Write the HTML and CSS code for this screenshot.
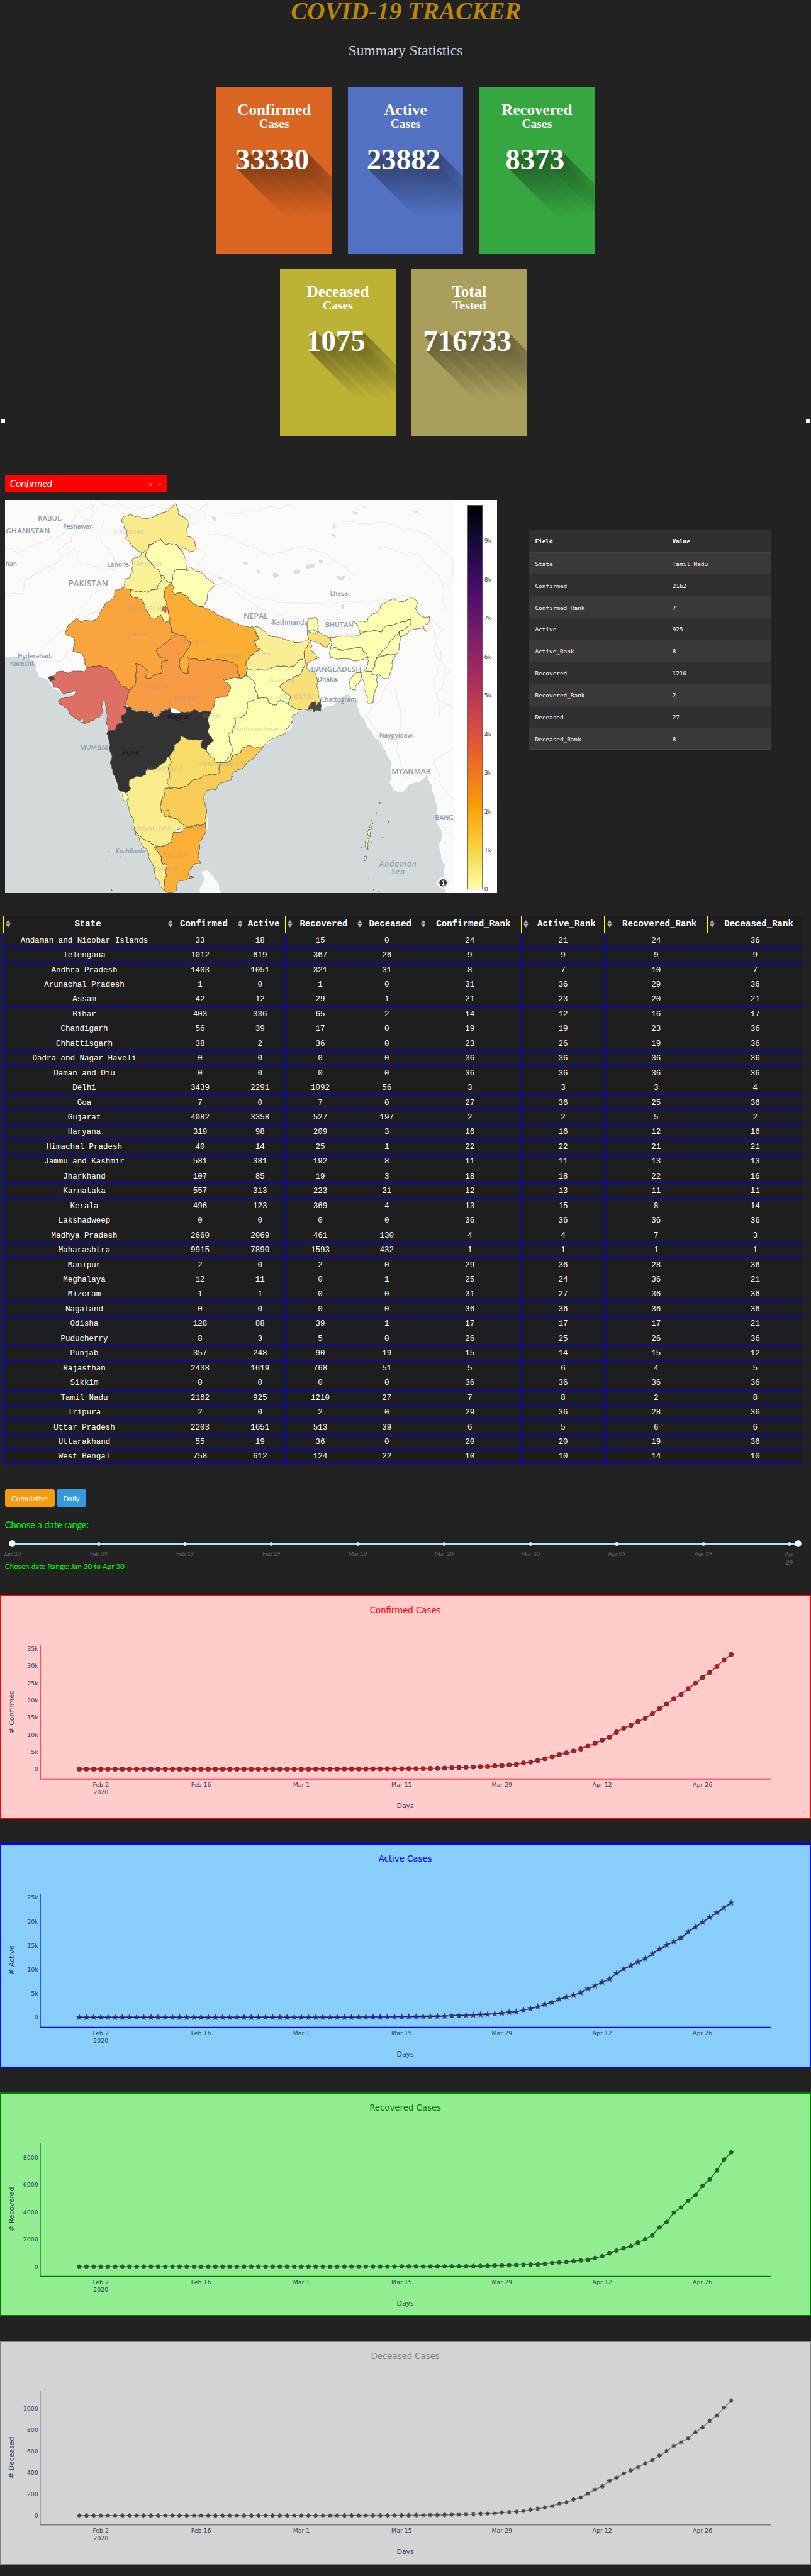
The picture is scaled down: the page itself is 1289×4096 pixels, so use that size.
FILE: index.html
```html
<!DOCTYPE html>
<html lang="en">
<head>
<meta charset="utf-8">
<title>COVID-19 Tracker</title>
<link rel="stylesheet" href="styles.css">
</head>
<body>
<div class="page">
  <header class="header">
    <h1 class="title">COVID-19 TRACKER</h1>
    <h2 class="subtitle">Summary Statistics</h2>
  </header>

  <section class="summary">
    <div class="card-row">
      <article class="card" data-rgb="219,101,35"><h3>Confirmed</h3><h4>Cases</h4><p class="count">33330</p></article>
      <article class="card" data-rgb="83,113,195"><h3>Active</h3><h4>Cases</h4><p class="count">23882</p></article>
      <article class="card" data-rgb="54,166,65"><h3>Recovered</h3><h4>Cases</h4><p class="count">8373</p></article>
    </div>
    <div class="card-row second">
      <article class="card" data-rgb="188,178,54"><h3>Deceased</h3><h4>Cases</h4><p class="count">1075</p></article>
      <article class="card" data-rgb="169,158,92"><h3>Total</h3><h4>Tested</h4><p class="count">716733</p></article>
    </div>
    <span class="handle left"></span><span class="handle right"></span>
  </section>

  <div class="dropdown"><span class="value">Confirmed</span><span class="clear">×</span><span class="caret"></span></div>

  <section class="overview">
    <svg class="map" id="map" viewBox="0 0 1000 800"></svg>
    <table class="info" id="info"></table>
  </section>

  <table class="states" id="states"></table>

  <div class="buttons"><button class="btn cumulative">Cumulative</button><button class="btn daily">Daily</button></div>
  <p class="range-label">Choose a date range:</p>
  <div class="slider" id="slider"></div>
  <p class="range-value">Chosen date Range: Jan 30 to Apr 30</p>

  <section class="charts" id="charts"></section>
</div>
<script src="script.js"></script>
</body>
</html>
```
FILE: styles.css
```css
* { box-sizing: border-box; }
body { margin: 0; background: #222; overflow-x: hidden; }
.page { width: 1648px; height: 5236px; zoom: 0.7822; background: #222; overflow: hidden; position: relative; }
h1, h2, h3, h4, p { margin: 0; }

.header { text-align: center; font-family: "Liberation Serif", serif; }
.title { font-size: 50px; line-height: 45px; font-style: italic; font-weight: 700; color: #b8860b; padding-left: 2px; }
.subtitle { margin-top: 38px; font-size: 30px; line-height: 40px; font-weight: 400; color: #c8d0d8; }

.summary { position: relative; margin-top: 53px; height: 789px; font-family: "Liberation Serif", serif; }
.card-row { display: flex; justify-content: center; gap: 32px; }
.card-row.second { margin-top: 30px; padding-right: 8px; }
.card { width: 235px; height: 340px; padding-top: 32.5px; overflow: hidden; text-align: center; color: #fff; font-weight: 700; }
.card h3 { font-size: 32px; line-height: 30px; }
.card h4 { font-size: 25px; line-height: 26px; }
.count { margin-top: 29px; padding-right: 8px; font-size: 60px; line-height: 60px; }
.handle { position: absolute; top: 676px; width: 9px; height: 9px; background: #fff; border-top: 1px solid #888; border-bottom: 1px solid #888; }
.handle.left { left: 1px; }
.handle.right { right: 1px; }

.dropdown { display: flex; align-items: center; width: 330px; height: 36px; margin-left: 10px; padding: 0 11px 0 10px; background: #f00; border-bottom: 1px solid #555; color: #fff; font-family: Lato, sans-serif; }
.dropdown .value { flex: 1; font-size: 20px; font-style: italic; }
.dropdown .clear { color: #b99; font-size: 18px; margin-right: 10px; padding-top: 2px; }
.dropdown .caret { border: 5px solid transparent; border-top-color: #a99; border-bottom: 0; margin-top: 5px; }

.overview { display: flex; align-items: flex-start; margin: 15px 0 46px 10px; }
.map { display: block; width: 1000px; height: 800px; background: #fff; flex: none; font-family: "Open Sans", sans-serif; }
.map .tick { font-family: "DejaVu Sans", sans-serif; font-size: 12px; fill: #2a3f5f; }
.map .state { stroke: #4b4b46; stroke-width: 1; stroke-linejoin: round; }
.map .label { fill: #8a9ba8; font-weight: 600; }
.map .road { fill: none; stroke-width: 1; }

.info { width: 494px; margin: 60px 0 0 64px; table-layout: fixed; border-spacing: 0; border-top: 1px solid #444; border-left: 1px solid #444; color: #fff; font: 12px "DejaVu Sans Mono", monospace; text-align: left; }
.info th, .info td { height: 44.6px; padding: 0 0 0 12px; border-right: 1px solid #444; border-bottom: 1px solid #444; background: #303030; line-height: 20px; padding-top: 3px; }
.info th { height: 46px; border-bottom-width: 2px; }
.info th:first-child { width: 279px; }

.states { width: 1627px; margin-left: 6px; table-layout: fixed; border-spacing: 0; background: #1e1e1e; color: #fff; font: 16px "Liberation Mono", monospace; text-align: center; }
.states th { height: 35px; padding: 0 0 3px; border: solid #ff0; border-width: 2px 0 2px 2px; font-size: 18px; }
.states th:last-child { border-right-width: 2px; }
.states th > div { display: flex; align-items: center; padding-left: 4px; }
.states th span { flex: 1; }
.states th svg { display: block; width: 10px; height: 15px; fill: #a9a9a9; flex: none; }
.states td { height: 30px; padding: 2px 0 0; border-bottom: 1.4px solid #00f; line-height: 26px; }
.states td:nth-child(1), .states td:nth-child(4), .states td:nth-child(5), .states td:nth-child(6), .states td:nth-child(7), .states td:nth-child(8) { border-left: 1px solid #00f; }
.states td:last-child { border-right: 1px solid #00f; }

.buttons { display: flex; gap: 4px; margin: 51px 0 0 10px; }
.btn { height: 36px; padding: 0; border: 0; border-radius: 4px; color: #fff; font: 15px Lato, sans-serif; }
.cumulative { width: 101px; background: #f39c12; }
.daily { width: 60px; background: #3498db; }
.range-label { margin: 21px 0 0 10px; font: 18.5px/30px Lato, sans-serif; color: #0f0; }
.slider { position: relative; height: 4px; margin: 22px 26px 0 25px; background: #abe2fb; font: 12px/18px Lato, sans-serif; color: #666; }
.slider .dot { position: absolute; top: -2px; width: 8px; height: 8px; margin-left: -4px; border: 2px solid #96dbfa; border-radius: 50%; background: #fff; }
.slider .knob { position: absolute; top: -5px; width: 14px; height: 14px; margin-left: -7px; border: 2px solid #96dbfa; border-radius: 50%; background: #fff; }
.slider .mark { position: absolute; top: 14px; width: 60px; margin-left: -30px; text-align: center; }
.range-value { margin: 31px 0 0 10px; font: 15px/24px Lato, sans-serif; color: #0f0; }

.charts { margin-top: 47px; display: flex; flex-direction: column; gap: 50px; }
.chart { display: block; width: 1648px; height: 455.5px; border: 3px solid; font-family: "DejaVu Sans", sans-serif; font-size: 12px; }
.chart text { fill: #2a3f5f; }
.chart .name { font-size: 17px; }
.chart .axis { font-size: 14px; }
.chart .axis-line, .chart .series { fill: none; stroke-width: 2; }
.chart .marker { stroke: #444; }
```
FILE: script.js
```js
const el = id => document.getElementById(id);

/* Long diagonal shadow of the counters, fading into the card colour */
document.querySelectorAll('.card').forEach(card => {
  const rgb = card.dataset.rgb.split(',').map(Number);
  card.style.background = `rgb(${rgb})`;
  const steps = [];
  for (let i = 1; i <= 98; i++) {
    const k = 0.64 + 0.36 * i / 98;
    steps.push(`${i}px ${i}px rgb(${rgb.map(v => Math.round(v * k))})`);
  }
  card.querySelector('.count').style.textShadow = steps.join(',');
});

/* Selected state */
const info = [['State', 'Tamil Nadu'], ['Confirmed', 2162], ['Confirmed_Rank', 7], ['Active', 925], ['Active_Rank', 8], ['Recovered', 1210], ['Recovered_Rank', 2], ['Deceased', 27], ['Deceased_Rank', 8]];
el('info').innerHTML = '<thead><tr><th>Field</th><th>Value</th></tr></thead><tbody>' +
  info.map((r, i) => `<tr>${r.map(c => `<td style="background:${i % 2 ? '#303030' : '#3a3a3a'}">${c}</td>`).join('')}</tr>`).join('') + '</tbody>';

/* State table */
const widths = [329.5, 142, 101.5, 142, 128.5, 209.5, 169, 209, 196];
const heads = ['State', 'Confirmed', 'Active', 'Recovered', 'Deceased', 'Confirmed_Rank', 'Active_Rank', 'Recovered_Rank', 'Deceased_Rank'];
const rows = `Andaman and Nicobar Islands,33,18,15,0,24,21,24,36
Telengana,1012,619,367,26,9,9,9,9
Andhra Pradesh,1403,1051,321,31,8,7,10,7
Arunachal Pradesh,1,0,1,0,31,36,29,36
Assam,42,12,29,1,21,23,20,21
Bihar,403,336,65,2,14,12,16,17
Chandigarh,56,39,17,0,19,19,23,36
Chhattisgarh,38,2,36,0,23,26,19,36
Dadra and Nagar Haveli,0,0,0,0,36,36,36,36
Daman and Diu,0,0,0,0,36,36,36,36
Delhi,3439,2291,1092,56,3,3,3,4
Goa,7,0,7,0,27,36,25,36
Gujarat,4082,3358,527,197,2,2,5,2
Haryana,310,98,209,3,16,16,12,16
Himachal Pradesh,40,14,25,1,22,22,21,21
Jammu and Kashmir,581,381,192,8,11,11,13,13
Jharkhand,107,85,19,3,18,18,22,16
Karnataka,557,313,223,21,12,13,11,11
Kerala,496,123,369,4,13,15,8,14
Lakshadweep,0,0,0,0,36,36,36,36
Madhya Pradesh,2660,2069,461,130,4,4,7,3
Maharashtra,9915,7890,1593,432,1,1,1,1
Manipur,2,0,2,0,29,36,28,36
Meghalaya,12,11,0,1,25,24,36,21
Mizoram,1,1,0,0,31,27,36,36
Nagaland,0,0,0,0,36,36,36,36
Odisha,128,88,39,1,17,17,17,21
Puducherry,8,3,5,0,26,25,26,36
Punjab,357,248,90,19,15,14,15,12
Rajasthan,2438,1619,768,51,5,6,4,5
Sikkim,0,0,0,0,36,36,36,36
Tamil Nadu,2162,925,1210,27,7,8,2,8
Tripura,2,0,2,0,29,36,28,36
Uttar Pradesh,2203,1651,513,39,6,5,6,6
Uttarakhand,55,19,36,0,20,20,19,36
West Bengal,758,612,124,22,10,10,14,10`.split('\n').map(r => r.split(','));
el('states').innerHTML = '<colgroup>' + widths.map(w => `<col style="width:${w}px">`).join('') + '</colgroup><thead><tr>' +
  heads.map(h => `<th><div><svg viewBox="0 0 10 15"><path d="M5 0L10 6.5H0zM0 7H10V8H0zM0 8.5H10L5 15z"/></svg><span>${h}</span></div></th>`).join('') + '</tr></thead><tbody>' +
  rows.map(r => `<tr>${r.map(c => `<td>${c}</td>`).join('')}</tr>`).join('') + '</tbody>';

/* Slider marks */
const marks = ['Jan 30', 'Feb 09', 'Feb 19', 'Feb 29', 'Mar 10', 'Mar 20', 'Mar 30', 'Apr 09', 'Apr 19', 'Apr<br>29'];
el('slider').innerHTML = marks.map((m, i) => {
  const p = i * 1000 / 91;
  return `<span class="dot" style="left:${p}%"></span><span class="mark" style="left:${p}%">${m}</span>`;
}).join('') + '<span class="knob" style="left:0%"></span><span class="knob" style="left:100%"></span>';

/* Time series: values from Mar 14 to Apr 30, preceded by the near-flat start */
const pad = (arr, early) => Array.from({ length: 92 - arr.length }, (_, i) => i > 32 ? early * (i - 32) / 12 : early / 30).concat(arr);
const confirmed = pad([100, 113, 125, 140, 155, 175, 210, 290, 360, 440, 530, 610, 690, 730, 900, 1020, 1250, 1380, 1770, 2040, 2500, 3020, 3550, 4200, 4730, 5250, 5850, 6700, 7490, 8410, 9330, 10770, 11890, 12740, 13790, 14780, 16090, 17600, 18920, 20430, 21670, 23380, 24890, 26600, 28100, 29800, 31700, 33330], 90);
const active = pad([90, 95, 100, 115, 130, 150, 170, 240, 310, 360, 420, 480, 530, 580, 750, 850, 1030, 1150, 1540, 1780, 2200, 2670, 3100, 3770, 4200, 4620, 5140, 5930, 6580, 7330, 7950, 9180, 10100, 10760, 11550, 12230, 13260, 14200, 15070, 15800, 16600, 17850, 18840, 19840, 20860, 21860, 22880, 23882], 80);
const recovered = pad([10, 13, 14, 15, 15, 20, 22, 25, 28, 35, 40, 45, 55, 70, 85, 100, 110, 125, 150, 165, 180, 220, 280, 325, 355, 420, 473, 515, 650, 770, 980, 1189, 1353, 1516, 1772, 2010, 2309, 2868, 3265, 3965, 4338, 4827, 5224, 5923, 6390, 7043, 7836, 8373], 4);
const deceased = pad([2, 2, 2, 3, 3, 4, 4, 5, 7, 7, 10, 11, 15, 17, 20, 27, 31, 35, 41, 53, 62, 75, 86, 111, 124, 149, 169, 206, 242, 273, 324, 353, 393, 420, 452, 488, 519, 560, 603, 652, 686, 722, 779, 825, 886, 937, 1008, 1075], 1);

const star = (n, outer, inner) => {
  let d = '';
  for (let i = 0; i < n * 2; i++) {
    const a = -Math.PI / 2 + i * Math.PI / n, r = i % 2 ? inner : outer;
    d += (i ? 'L' : 'M') + (r * Math.cos(a)).toFixed(2) + ' ' + (r * Math.sin(a)).toFixed(2);
  }
  return d + 'z';
};
const shapes = {
  circle: 'M4 0A4 4 0 1 1 -4 0A4 4 0 1 1 4 0z',
  star: star(5, 4.6, 2),
  pentagon: star(5, 4, 3.24),
  asterisk: 'M0-4.6V4.6M-4.6 0H4.6M-3.2-3.2L3.2 3.2M-3.2 3.2L3.2-3.2'
};
const charts = [
  { n: 'Confirmed', v: confirmed, bg: '#ffcccb', c: 'red', zero: 354, k: .006991, t: [0, 5, 10, 15, 20, 25, 30, 35].map(x => [x * 1000, x ? x + 'k' : '0']), m: 'circle' },
  { n: 'Active', v: active, bg: '#87cefa', c: 'blue', zero: 353.4, k: .00973, t: [0, 5, 10, 15, 20, 25].map(x => [x * 1000, x ? x + 'k' : '0']), m: 'star' },
  { n: 'Recovered', v: recovered, bg: '#90ee90', c: 'green', zero: 354.5, k: .02779, t: [0, 2000, 4000, 6000, 8000].map(x => [x, x]), m: 'pentagon' },
  { n: 'Deceased', v: deceased, bg: '#d3d3d3', c: 'gray', zero: 355, k: .2171, t: [0, 200, 400, 600, 800, 1000].map(x => [x, x]), m: 'asterisk' }
];
const px = i => 161.5 + i * 14.548;
const days = [[3, 'Feb 2'], [17, 'Feb 16'], [31, 'Mar 1'], [45, 'Mar 15'], [59, 'Mar 29'], [73, 'Apr 12'], [87, 'Apr 26']];
el('charts').innerHTML = charts.map(c => {
  const pts = c.v.map((v, i) => [px(i).toFixed(1), (c.zero - v * c.k).toFixed(1)]);
  return `<svg class="chart" viewBox="3 3 1642 449.5" style="background:${c.bg};border-color:${c.c}">
<text class="name" style="fill:${c.c}" x="823.5" y="37" text-anchor="middle">${c.n} Cases</text>
${c.t.map(t => `<text x="78" y="${c.zero - t[0] * c.k + 4.3}" text-anchor="end">${t[1]}</text>`).join('')}
${days.map(d => `<text x="${px(d[0])}" y="389.5" text-anchor="middle">${d[1]}</text>`).join('')}
<text x="${px(3)}" y="405.5" text-anchor="middle">2020</text>
<text class="axis" x="823.5" y="433" text-anchor="middle">Days</text>
<text class="axis" transform="translate(29 237.5) rotate(-90)" text-anchor="middle"># ${c.n}</text>
<path class="axis-line" stroke="${c.c}" d="M82 102.5V374H1565.5"/>
<polyline class="series" stroke="${c.c}" points="${pts.join(' ')}"/>
${pts.map(p => `<path class="marker" d="${shapes[c.m]}" transform="translate(${p})" fill="${c.c}" stroke-width="${c.m === 'asterisk' ? 1.7 : 2}"/>`).join('')}
</svg>`;
}).join('');

/* Map. Outline vertices are joined with a rough line; an edge shared by two states gets the same roughness. */
const SX = .6566, SY = .574, OX = 15, OY = 132;
const rand = (a, b) => { const s = Math.sin(a[0] * 12.9898 + a[1] * 78.233 + b[0] * 37.719 + b[1] * 4.581) * 43758.5453; return s - Math.floor(s) - .5; };
const rough = (a, b, n) => {
  const len = Math.hypot(a[0] - b[0], a[1] - b[1]);
  if (!n || len < 4) return [a];
  const flip = a[0] > b[0] || (a[0] === b[0] && a[1] > b[1]);
  const r = (flip ? rand(b, a) : rand(a, b)) * (flip ? -1 : 1) * Math.min(.32, 7 / len);
  const m = [(a[0] + b[0]) / 2 - (b[1] - a[1]) * r, (a[1] + b[1]) / 2 + (b[0] - a[0]) * r];
  return rough(a, m, n - 1).concat(rough(m, b, n - 1));
};
const shape = (s, n = 3) => {
  const p = s.trim().split(/\s+/).map(q => q.split(',').map(Number)).map(q => [(q[0] - OX) * SX, (q[1] - OY) * SY]);
  return 'M' + p.flatMap((a, i) => rough(a, p[(i + 1) % p.length], n)).map(q => q[0].toFixed(1) + ' ' + q[1].toFixed(1)).join('L') + 'Z';
};
const line = s => shape(s, 3).slice(0, -1);
const land = '15,690 30,686 60,692 90,690 107,705 110,735 122,760 150,768 165,800 190,818 215,822 238,806 225,830 185,838 180,842 215,890 252,921 290,912 315,885 318,845 326,860 330,900 333,945 331,965 337,1010 345,1050 355,1110 365,1160 375,1185 390,1205 410,1260 425,1320 445,1350 460,1385 475,1430 480,1460 500,1505 525,1524 545,1510 553,1480 590,1470 580,1450 600,1425 620,1420 618,1340 638,1300 636,1250 630,1190 640,1160 665,1160 680,1135 715,1125 720,1100 760,1070 815,1005 880,960 905,925 900,905 925,880 950,870 990,878 1000,870 1030,862 1050,838 1070,820 1090,838 1108,845 1110,880 1130,920 1150,950 1170,985 1195,1020 1210,1080 1205,1130 1215,1160 1245,1165 1265,1140 1300,1130 1320,1105 1335,1140 1345,1200 1350,1260 1365,1300 1358,1350 1375,1420 1365,1480 1380,1530 1410,1530 1410,125 5,125 5,690';
const states = [
  ['#faea8b', '543,145 552,185 585,210 575,235 578,262 600,275 607,302 585,318 562,300 560,312 548,290 536,292 526,285 513,290 497,270 483,278 460,290 456,308 440,320 424,310 410,298 402,285 388,268 392,240 383,232 385,214 375,208 382,190 400,184 430,190 455,198 495,182 528,160'],
  ['#fcffb2', '456,308 460,290 483,278 497,270 513,290 526,285 536,292 548,290 560,312 568,325 576,345 575,370 582,382 560,378 540,382 533,400 530,425 515,420 497,398 488,378 475,368 465,350 450,328'],
  ['#faf096', '440,320 456,308 450,328 465,350 475,368 488,378 497,398 500,418 490,432 485,450 470,450 455,460 440,458 415,455 402,448 380,447 385,420 410,385 405,345 430,332'],
  ['#faf39c', '402,448 415,455 440,458 455,460 470,450 485,450 490,432 500,418 497,398 515,420 530,425 530,428 515,440 509,470 515,500 520,530 524,560 510,568 503,555 497,540 480,555 467,550 462,540 450,520 440,488 425,478 407,475'],
  ['#fcffb2', '530,428 530,425 533,400 540,382 560,378 582,382 588,368 600,380 620,386 640,410 665,432 650,450 640,475 628,510 605,505 590,490 580,475 560,460 540,468 532,450 540,440'],
  ['#f9a43c', '380,440 380,447 402,448 407,475 425,478 440,488 450,520 462,540 467,550 480,555 497,540 503,555 510,568 524,560 525,570 530,600 550,608 520,630 485,660 490,685 515,692 520,700 500,705 500,745 480,750 465,765 448,760 455,735 435,715 418,710 420,750 418,785 402,805 375,790 358,765 345,738 315,722 268,725 262,700 248,672 225,668 230,625 202,610 205,590 235,550 250,565 300,552 320,510 340,490 358,450'],
  ['#df6f63', '268,725 315,722 345,738 358,765 375,790 402,805 395,825 388,850 393,880 375,895 380,920 360,930 355,948 335,950 332,900 325,850 318,842 318,885 290,912 252,921 215,890 180,842 190,835 228,825 238,806 200,820 165,795 160,765 175,742 210,745 250,738 262,742'],
  ['#f79c43', '550,608 570,612 588,635 585,655 560,690 555,720 565,742 582,745 583,710 580,690 605,695 640,695 660,700 690,702 710,705 735,722 735,745 742,763 692,765 713,795 700,830 665,835 660,870 650,890 630,880 600,875 570,885 525,870 500,875 492,900 470,885 405,870 388,850 395,825 402,805 418,785 420,750 418,710 435,715 455,735 448,760 465,765 480,750 500,745 500,705 520,700 515,692 490,685 485,660 520,630'],
  ['#fbad34', '530,428 540,440 532,450 540,468 560,460 580,475 590,490 605,505 628,510 660,525 700,550 735,568 760,580 782,580 790,605 802,620 785,632 795,655 810,665 780,680 762,700 765,730 760,755 742,763 735,745 735,722 710,705 690,702 660,700 640,695 605,695 580,690 583,710 582,745 565,742 555,720 560,690 585,655 588,635 570,612 550,608 530,600 525,570 524,560 520,530 515,500 509,470 515,440'],
  ['#e56d3f', '503,512 512,506 518,520 512,530 500,522'],
  ['#fcffb2', '760,755 790,785 788,800 798,835 765,850 760,890 725,905 720,955 705,960 715,1000 712,1040 685,1062 665,1060 660,1045 638,1020 640,1000 660,985 645,960 645,925 650,890 660,870 665,835 700,830 713,795 692,765 742,763'],
  ['#333335', '405,865 405,875 470,885 475,900 492,900 500,878 525,870 527,885 570,885 600,875 650,880 650,890 645,925 645,960 660,985 640,1000 638,1020 622,1010 625,980 600,982 560,968 552,990 538,1000 525,1035 515,1045 505,1065 480,1085 455,1085 450,1105 425,1110 400,1125 405,1155 388,1170 368,1160 355,1110 345,1050 337,1010 330,960 335,950 355,948 360,930 380,920 375,895 393,880 380,862'],
  ['#faee94', '790,580 810,590 830,612 870,620 905,632 952,632 940,670 942,692 920,705 910,720 880,720 830,730 790,735 765,730 762,700 780,680 810,665 795,655 785,632 802,620'],
  ['#fcffb2', '765,730 790,735 830,730 880,720 910,720 920,705 942,692 942,720 930,750 905,765 865,790 870,800 900,830 890,855 868,840 855,858 830,850 828,835 798,835 788,800 790,785 760,755'],
  ['#f8df78', '950,595 975,605 985,598 1020,620 1020,640 1010,655 990,640 960,630 965,650 958,660 975,680 988,692 970,698 950,712 950,730 975,745 980,790 985,810 990,878 960,878 945,875 928,875 905,865 890,855 900,830 870,800 865,790 905,765 930,750 942,720 942,692 940,670 952,632'],
  ['#fcffb2', '955,552 975,547 983,560 982,598 950,595'],
  ['#fcffb2', '798,835 828,835 830,850 855,858 868,840 890,855 905,865 928,875 905,895 900,925 880,960 840,980 815,1005 790,1012 775,1002 750,1010 735,1035 720,1035 715,1050 700,1062 685,1062 712,1040 715,1000 705,960 720,955 725,905 760,890 765,850'],
  ['#f8dc69', '560,968 600,982 625,980 622,1010 638,1020 660,1045 665,1060 685,1062 680,1095 650,1105 630,1105 595,1125 575,1145 525,1152 515,1130 525,1115 520,1080 530,1060 525,1035 538,1000 552,990'],
  ['#f8cb57', '815,1005 760,1070 720,1100 715,1125 680,1135 665,1160 640,1160 630,1190 636,1250 638,1270 620,1285 600,1285 570,1295 565,1280 545,1260 525,1255 500,1240 498,1200 510,1180 508,1155 525,1152 575,1145 595,1125 630,1105 650,1105 680,1095 685,1062 700,1062 715,1050 720,1035 735,1035 750,1010 775,1002 790,1012'],
  ['#faeb8c', '525,1035 530,1060 520,1080 525,1115 515,1130 525,1152 508,1155 510,1180 498,1200 500,1240 525,1255 545,1260 565,1280 570,1295 535,1310 532,1345 490,1358 465,1345 440,1330 415,1300 412,1260 392,1210 396,1180 388,1170 405,1155 400,1125 425,1110 450,1105 455,1085 480,1085 505,1065 515,1045'],
  ['#fcffb2', '372,1165 388,1170 396,1180 390,1202 380,1190'],
  ['#faed90', '415,1300 440,1330 465,1345 490,1358 478,1362 500,1395 500,1420 517,1425 515,1460 510,1515 480,1470 475,1430 455,1370 430,1330'],
  ['#fbaf37', '638,1270 636,1310 615,1345 620,1420 600,1423 582,1460 600,1470 555,1480 545,1515 525,1524 510,1515 515,1460 517,1425 500,1420 500,1395 478,1362 490,1358 532,1345 535,1310 560,1310 570,1295 600,1285 620,1285'],
  ['#fcffb2', '1022,618 1060,614 1115,607 1180,600 1200,575 1270,555 1268,578 1235,598 1210,628 1200,650 1165,690 1160,720 1150,740 1125,745 1140,700 1125,670 1120,652 1070,665 1022,655'],
  ['#fcffb2', '1022,658 1040,655 1060,665 1100,655 1120,652 1125,670 1140,690 1120,698 1050,695 1022,690'],
  ['#fcffb2', '1092,562 1135,568 1138,550 1165,530 1180,505 1215,482 1240,493 1275,476 1295,495 1285,515 1298,540 1328,545 1325,570 1310,580 1318,598 1305,585 1280,588 1240,618 1235,598 1268,578 1270,555 1200,575 1180,600 1115,607 1110,580'],
  ['#fcffb2', '1235,598 1240,618 1235,650 1230,675 1215,680 1185,685 1165,690 1200,650 1210,628'],
  ['#fcffb2', '1165,690 1185,685 1222,680 1215,720 1200,765 1150,750 1150,740 1160,720'],
  ['#fcffb2', '1120,742 1150,740 1150,750 1167,758 1167,790 1155,850 1135,855 1132,820'],
  ['#fcffb2', '1120,742 1115,770 1100,805 1085,800 1078,770 1100,745'],
  ['#4b4b46', '150,760 165,758 168,768 155,778'], ['#4b4b46', '960,855 975,845 980,860 990,845 992,880 982,875 970,882 965,870 955,876'],
  ['#fcffb2', '1148,1265 1153,1280 1148,1297 1142,1290'], ['#fcffb2', '1140,1298 1148,1300 1145,1325 1138,1320'], ['#fcffb2', '1136,1330 1142,1335 1138,1370 1132,1365'], ['#fcffb2', '1126,1395 1133,1393 1132,1408 1127,1410'],
  ['#fcffb2', '250,910 258,908 257,920 251,920'], ['#f8cb57', '505,1232 520,1230 524,1245 510,1255'],
  ...['1175,1205', '1164,1240', '1201,1272', '1183,1328', '1119,1361', '1148,1345', '1141,1473', '1156,1512', '1172,1518', '334,1377', '328,1408', '371,1396', '345,1514', '904,920', '718,1112'].map(q => { const [x, y] = q.split(',').map(Number); return ['#888', `${x - 1},${y} ${x},${y - 2} ${x + 1},${y} ${x},${y + 2}`]; })
];
const borders = ['15,470 70,462 75,420 130,380 185,350 180,310 220,280 240,230 290,180 280,132', '300,132 320,150 370,145 410,165 470,150 520,160 545,145', '575,150 620,165 640,140 635,200 590,215', '607,302 640,320 600,380 665,432', '665,432 700,425 760,480 830,530 900,545 955,552', '985,560 1040,548 1095,565', '985,600 1050,612 1095,605', '380,440 330,505 210,580 230,640 190,700 110,712', '960,705 1015,720 1085,735', '1328,545 1370,590 1340,660 1390,740 1350,830 1404,870', '1210,765 1170,850 1130,900 1170,960 1180,1010', '1404,1010 1340,1060 1360,1130 1404,1190', '1350,1250 1380,1300 1404,1340'];
const rivers = ['15,300 60,320 110,290 200,250 240,170 290,150', '60,420 160,380 230,300 250,360 350,380', '240,560 280,470 330,430 360,360 300,250 320,200', '110,690 180,600 280,560 300,520', '640,250 720,270 830,330 920,300 1020,330 1100,400', '1060,210 1200,215 1330,260 1400,350 1390,450', '620,380 800,480 950,500 1150,490 1260,470', '1330,560 1365,680 1340,780 1360,900', '1220,800 1240,900 1225,1020 1260,1120', '700,190 800,170 900,150', '1170,300 1290,320 1365,420 1380,520'];
const lakes = ['845,388 860,392 862,402 850,410 842,400', '905,385 925,378 930,388 912,395', '945,365 970,358 975,368 950,375', '985,343 1000,345 998,355 986,353', '1040,400 1070,402 1062,416 1045,415', '750,350 768,358 755,362', '655,188 668,192 667,207 660,205', '1090,172 1108,175 1105,185 1092,182', '1022,255 1045,260 1035,267', '673,404 690,405 688,414 676,413', '1270,175 1292,172 1290,180', '1055,505 1065,500 1060,520', '1120,155 1135,158 1125,162', '790,375 805,388 798,392', '1030,210 1040,225 1033,235'];
/* text, left, baseline, right, size, faded under a state fill */
const labels = [
  ['KABUL▪', 117, 206, 193, 13.5], ['Peshawar▪', 194, 235, 289, 12.5], ['GHANISTAN', 17, 249, 154, 14], ['▪Islamabad', 342, 252, 445, 12.5, 1], ['har▪', 16, 366, 53, 12.5], ['Lahore▪', 331, 369, 401, 12.5], ['▪Amritsar', 415, 365, 503, 12.5, 1], ['PAKISTAN', 211, 437, 334, 15], ['NEW DELHI', 394, 526, 506, 14, 1], ['Jaipur▪', 396, 615, 461, 12.5, 1], ['Kanpur▪', 567, 639, 642, 12.5, 1], ['Patna▪', 776, 682, 837, 12.5, 1], ['Varanasi▪', 667, 696, 750, 12.5, 1], ['Hyderabad▪', 54, 694, 160, 12.5], ['Karachi▪', 30, 720, 107, 12.5], ['Ahmedabad▪', 211, 813, 329, 12.5, 1], ['Bhopal▪', 452, 802, 525, 12.5, 1], ['INDIA', 537, 847, 607, 16, 1], ['Surat▪', 285, 905, 340, 12.5, 1], ['Nagpur▪', 518, 907, 592, 12.5, 2], ['Bhilai▪', 625, 903, 685, 12.5, 1], ['Bhubaneshwar▪', 722, 951, 866, 12.5, 1], ['MUMBAI', 247, 1016, 333, 14], ['▪Pune', 374, 1035, 430, 12.5, 2], ['Hyderabad▪', 457, 1091, 567, 12.5, 1], ['Visakhapatnam▪', 614, 1075, 762, 12.5, 1], ['BENGALURU▪', 398, 1303, 531, 14, 1], ['Chennai▪', 560, 1297, 639, 12.5, 1], ['Kozhikode', 357, 1384, 450, 12.5], ['▪Coimba', 501, 1395, 576, 12.5, 1], ['Madurai▪', 470, 1446, 553, 12.5, 1], ['NEPAL', 753, 553, 829, 15], ['▪Kathmandu', 837, 574, 953, 12.5], ['BHUTAN', 1006, 583, 1093, 14], ['Lhasa▪', 1021, 471, 1080, 12.5], ['BANGLADESH', 962, 741, 1118, 14], ['Dhaka▪', 982, 776, 1047, 12.5], ['Asansol▪', 833, 779, 911, 12.5, 1], ['KOLKATA▪', 865, 837, 967, 14, 1], ['Chattogram▪', 992, 848, 1107, 12.5], ['Naypyidaw▪', 1173, 975, 1280, 12.5], ['MYANMAR', 1211, 1101, 1332, 14.5], ['BANG', 1346, 1266, 1403, 14]
];
const inferno = ['#fcffa4', '#f7d13d', '#fb9b06', '#ed6925', '#cf4446', '#a52c60', '#781c6d', '#4a0c6b', '#1b0c41', '#000004'];
el('map').innerHTML = `<defs><linearGradient id="scale" x1="0" y1="1" x2="0" y2="0">${inferno.map((c, i) => `<stop offset="${i / 9}" stop-color="${c}"/>`).join('')}</linearGradient>
<clipPath id="frame"><rect width="912" height="800"/></clipPath></defs>
<g clip-path="url(#frame)"><rect width="912" height="800" fill="#d4dadc"/>
<path d="${shape(land)}" fill="#fafaf8"/><path d="${shape('618,1530 622,1500 632,1470 620,1448 640,1445 660,1465 675,1490 686,1530')}" fill="#fafaf8"/>
${rivers.map(s => `<path class="road" stroke="#e6eaeb" d="${line(s + ' ' + s.split(' ').reverse().slice(1).join(' '))}"/>`).join('')}
${borders.map(s => `<path class="road" stroke="#f3e1e2" d="${line(s + ' ' + s.split(' ').reverse().slice(1).join(' '))}"/>`).join('')}
${lakes.map(s => `<path fill="#d9dfe1" d="${shape(s)}"/>`).join('')}
${states.map(s => `<path class="state" fill="${s[0]}" d="${shape(s[1])}"/>`).join('')}
${labels.map(l => `<text class="label" x="${(l[1] - OX) * SX}" y="${(l[2] - OY) * SY}" font-size="${l[4]}" textLength="${((l[3] - l[1]) * SX).toFixed(1)}" lengthAdjust="spacingAndGlyphs" opacity="${l[5] === 1 ? .28 : 1}"${l[5] === 2 ? ' style="fill:#1c1c20"' : ''}>${l[0].replace('▪', '<tspan font-size="8">▪</tspan>')}</text>`).join('')}
<g font-style="italic" font-size="15" letter-spacing="1.5" text-anchor="middle"><text class="label" x="799" y="746">Andaman</text><text class="label" x="799" y="761">Sea</text></g>
<circle cx="890" cy="778" r="12" fill="#eceff0"/><circle cx="890" cy="778" r="7.5" fill="#333"/><path d="M888 776H891V782M887.5 782H893" stroke="#fff" stroke-width="2" fill="none"/><circle cx="890" cy="773" r="1.3" fill="#fff"/></g>
<rect x="940.5" y="11" width="29.5" height="780" fill="url(#scale)" stroke="#444"/>
${[0, 1, 2, 3, 4, 5, 6, 7, 8, 9].map(i => `<text class="tick" x="974" y="${795 - i * 78.67}">${i ? i + 'k' : 0}</text>`).join('')}`;
```
